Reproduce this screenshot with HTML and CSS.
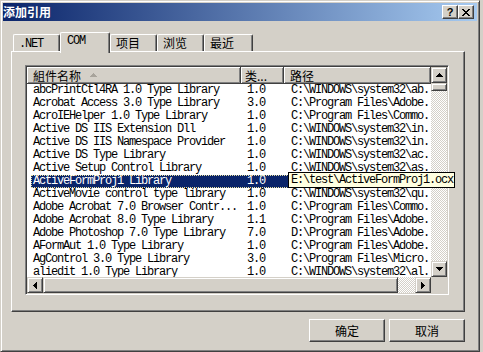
FILE: index.html
```html
<!DOCTYPE html>
<html lang="zh-CN">
<head>
    <meta charset="utf-8">
    <title>添加引用</title>
    <link rel="stylesheet" href="styles.css">
</head>
<body>
    <div class="window">
        <div class="titlebar">
            <span class="title">添加引用</span>
            <div class="caption-btns">
                <div class="cap-btn help">?</div>
                <div class="cap-btn close">
                    <svg width="8" height="7" viewBox="0 0 8 7"><path d="M0 0h2v1h-2zM6 0h2v1h-2zM1 1h2v1h-2zM5 1h2v1h-2zM2 2h4v1h-4zM3 3h2v1h-2zM2 4h4v1h-4zM1 5h2v1h-2zM5 5h2v1h-2zM0 6h2v1h-2zM6 6h2v1h-2z"/></svg>
                </div>
            </div>
        </div>
        <div class="content">
            <div class="tabs">
                <div class="tab mono t-net">.NET</div>
                <div class="tab mono t-com active">COM</div>
                <div class="tab t-proj">项目</div>
                <div class="tab t-browse">浏览</div>
                <div class="tab t-recent">最近</div>
            </div>
            <div class="panel">
                <div class="listview">
                    <div class="list-main">
                        <div class="header">
                            <div class="hcell h1">組件名称 <svg class="sort" width="7" height="4" viewBox="0 0 7 4"><path d="M3 0h1v1h-1zM2 1h3v1h-3zM1 2h5v1h-5zM0 3h7v1h-7z"/></svg></div>
                            <div class="hcell h2">类...</div>
                            <div class="hcell h3">路径</div>
                        </div>
                        <div class="rows mono">
                            <div class="row"><span class="c1">abcPrintCtl4RA 1.0 Type Library</span><span class="c2">1.0</span><span class="c3">C:\WINDOWS\system32\ab...</span></div>
                            <div class="row"><span class="c1">Acrobat Access 3.0 Type Library</span><span class="c2">3.0</span><span class="c3">C:\Program Files\Adobe...</span></div>
                            <div class="row"><span class="c1">AcroIEHelper 1.0 Type Library</span><span class="c2">1.0</span><span class="c3">C:\Program Files\Commo...</span></div>
                            <div class="row"><span class="c1">Active DS IIS Extension Dll</span><span class="c2">1.0</span><span class="c3">C:\WINDOWS\system32\in...</span></div>
                            <div class="row"><span class="c1">Active DS IIS Namespace Provider</span><span class="c2">1.0</span><span class="c3">C:\WINDOWS\system32\in...</span></div>
                            <div class="row"><span class="c1">Active DS Type Library</span><span class="c2">1.0</span><span class="c3">C:\WINDOWS\system32\ac...</span></div>
                            <div class="row"><span class="c1">Active Setup Control Library</span><span class="c2">1.0</span><span class="c3">C:\WINDOWS\system32\as...</span></div>
                            <div class="row selected"><span class="c1">ActiveFormProj1 Library</span><span class="c2">1.0</span><span class="c3">E:\test\ActiveFormProj1.ocx</span></div>
                            <div class="row"><span class="c1">ActiveMovie control type library</span><span class="c2">1.0</span><span class="c3">C:\WINDOWS\system32\qu...</span></div>
                            <div class="row"><span class="c1">Adobe Acrobat 7.0 Browser Contr...</span><span class="c2">1.0</span><span class="c3">C:\Program Files\Commo...</span></div>
                            <div class="row"><span class="c1">Adobe Acrobat 8.0 Type Library</span><span class="c2">1.1</span><span class="c3">C:\Program Files\Adobe...</span></div>
                            <div class="row"><span class="c1">Adobe Photoshop 7.0 Type Library</span><span class="c2">7.0</span><span class="c3">D:\Program Files\Adobe...</span></div>
                            <div class="row"><span class="c1">AFormAut 1.0 Type Library</span><span class="c2">1.0</span><span class="c3">C:\Program Files\Adobe...</span></div>
                            <div class="row"><span class="c1">AgControl 3.0 Type Library</span><span class="c2">3.0</span><span class="c3">C:\Program Files\Micro...</span></div>
                            <div class="row"><span class="c1">aliedit 1.0 Type Library</span><span class="c2">1.0</span><span class="c3">C:\WINDOWS\system32\al...</span></div>
                        </div>
                    </div>
                    <div class="vscroll">
                        <div class="sb-btn"><svg width="7" height="4" viewBox="0 0 7 4"><path d="M3 0h1v1h-1zM2 1h3v1h-3zM1 2h5v1h-5zM0 3h7v1h-7z"/></svg></div>
                        <div class="sb-thumb v-thumb"></div>
                        <div class="sb-track"></div>
                        <div class="sb-btn"><svg width="7" height="4" viewBox="0 0 7 4"><path d="M0 0h7v1h-7zM1 1h5v1h-5zM2 2h3v1h-3zM3 3h1v1h-1z"/></svg></div>
                    </div>
                    <div class="hscroll">
                        <div class="sb-btn"><svg width="4" height="7" viewBox="0 0 4 7"><path d="M3 0h1v7h-1zM2 1h1v5h-1zM1 2h1v3h-1zM0 3h1v1h-1z"/></svg></div>
                        <div class="sb-thumb h-thumb"></div>
                        <div class="sb-track"></div>
                        <div class="sb-btn"><svg width="4" height="7" viewBox="0 0 4 7"><path d="M0 0h1v7h-1zM1 1h1v5h-1zM2 2h1v3h-1zM3 3h1v1h-1z"/></svg></div>
                    </div>
                    <div class="corner"></div>
                    <div class="tooltip mono">E:\test\ActiveFormProj1.ocx</div>
                </div>
            </div>
            <div class="buttons">
                <div class="btn default">确定</div>
                <div class="btn">取消</div>
            </div>
        </div>
    </div>
</body>
</html>
```

FILE: styles.css
```css
* {
    box-sizing: border-box;
}
body {
    margin: 0;
    width: 483px;
    height: 352px;
    overflow: hidden;
    background: #d4d0c8;
    font-family: 'Noto Sans CJK SC', sans-serif;
    font-size: 12px;
    color: #000;
}
.mono {
    font-family: 'Liberation Mono', monospace;
    font-size: 12px;
    letter-spacing: -1.2px;
}
.window {
    width: 480px;
    height: 352px;
    border: 1px solid;
    border-color: #d4d0c8 #404040 #404040 #d4d0c8;
    box-shadow: inset 1px 1px #fff, inset -1px -1px #808080;
    padding: 2px;
    display: flex;
    flex-direction: column;
}
.titlebar {
    height: 18px;
    background: linear-gradient(90deg, #0a246a 0%, #a6caf0 100%);
    display: flex;
    align-items: center;
    justify-content: space-between;
    padding: 0 3px 0 0;
}
.title {
    color: #fff;
    font-weight: bold;
    font-size: 12px;
    line-height: 18px;
}
.caption-btns {
    display: flex;
}
.cap-btn {
    width: 16px;
    height: 14px;
    background: #d4d0c8;
    border: 1px solid;
    border-color: #fff #404040 #404040 #fff;
    box-shadow: inset -1px -1px #808080;
    display: flex;
    align-items: center;
    justify-content: center;
}
.help {
    font-family: 'Liberation Sans', sans-serif;
    font-weight: bold;
    font-size: 11px;
    line-height: 12px;
}
.content {
    flex: 1;
    display: flex;
    flex-direction: column;
    padding: 11px 12px 0 8px;
}
.tabs {
    height: 19px;
    display: flex;
    align-items: flex-end;
    padding-left: 2px;
}
.tab {
    height: 17px;
    line-height: 16px;
    padding: 0 0 0 5px;
    border: 1px solid;
    border-bottom: none;
    border-color: #fff #404040 #fff #fff;
    box-shadow: inset -1px 0 #808080;
    border-radius: 2px 2px 0 0;
    background: #d4d0c8;
    white-space: nowrap;
}
.tab.mono {
    padding-top: 1px;
}
.t-net { width: 47px; }
.t-com { width: 50px; }
.t-proj { width: 47px; }
.t-browse { width: 47px; }
.t-recent { width: 49px; }
.tab.active {
    height: 21px;
    margin-bottom: -2px;
    position: relative;
    z-index: 1;
    padding-top: 0;
    padding-left: 6px;
}
.panel {
    width: 454px;
    height: 261px;
    border: 1px solid;
    border-color: #fff #404040 #404040 #fff;
    box-shadow: inset -1px -1px #808080;
    padding: 13px;
}
.listview {
    position: relative;
    width: 424px;
    height: 230px;
    background: #fff;
    border: 1px solid;
    border-color: #808080 #fff #fff #808080;
    box-shadow: inset 1px 1px #404040, inset -1px -1px #d4d0c8;
    padding: 1px;
    display: grid;
    grid-template-columns: 1fr 16px;
    grid-template-rows: 1fr 16px;
}
.list-main {
    display: flex;
    flex-direction: column;
    overflow: hidden;
    min-width: 0;
}
.header {
    height: 17px;
    display: flex;
    flex-shrink: 0;
}
.hcell {
    height: 17px;
    line-height: 15px;
    background: #d4d0c8;
    border-right: 1px solid #404040;
    border-bottom: 1px solid #404040;
    box-shadow: inset 1px 1px #fff, inset -1px -1px #808080;
    white-space: nowrap;
    display: flex;
    align-items: center;
}
.h1 {
    width: 214px;
    padding-left: 6px;
}
.h2 {
    width: 43px;
    padding-left: 4px;
}
.h3 {
    flex: 1;
    padding-left: 6px;
}
.sort {
    fill: #a8a49c;
    margin-left: 9px;
}
.rows {
    flex: 1;
    overflow: hidden;
}
.row {
    height: 13px;
    line-height: 13px;
    display: flex;
    margin-left: 4px;
    white-space: nowrap;
}
.row span {
    flex-shrink: 0;
    overflow: hidden;
}
.c1 {
    width: 210px;
    padding-left: 2px;
}
.c2 {
    width: 43px;
    padding-left: 6px;
}
.c3 {
    padding-left: 7px;
}
.row.selected {
    background: #0a246a;
    color: #fff;
    outline: 1px dotted #e8e0a0;
    outline-offset: -1px;
}
.vscroll,
.hscroll {
    display: flex;
    background: #d4d0c8;
}
.vscroll {
    flex-direction: column;
}
.sb-btn,
.sb-thumb {
    flex-shrink: 0;
    width: 16px;
    height: 16px;
    background: #d4d0c8;
    border: 1px solid;
    border-color: #d4d0c8 #404040 #404040 #d4d0c8;
    box-shadow: inset 1px 1px #fff, inset -1px -1px #808080;
    display: flex;
    align-items: center;
    justify-content: center;
}
.v-thumb {
    height: 8px;
}
.h-thumb {
    width: 355px;
}
.sb-track {
    flex: 1;
    background: repeating-conic-gradient(#fff 0 25%, #d4d0c8 0 50%) 0 0 / 2px 2px;
}
.corner {
    background: #d4d0c8;
}
.tooltip {
    position: absolute;
    left: 262px;
    top: 106px;
    width: 167px;
    height: 16px;
    line-height: 14px;
    padding-left: 2px;
    background: #ffffe1;
    border: 1px solid #000;
    white-space: nowrap;
    z-index: 2;
}
.buttons {
    margin-top: 7px;
    display: flex;
    justify-content: flex-end;
    gap: 4px;
}
.btn {
    width: 76px;
    height: 23px;
    background: #d4d0c8;
    border: 1px solid;
    border-color: #fff #404040 #404040 #fff;
    box-shadow: inset -1px -1px #808080;
    display: flex;
    align-items: center;
    justify-content: center;
    line-height: 1;
}
```
